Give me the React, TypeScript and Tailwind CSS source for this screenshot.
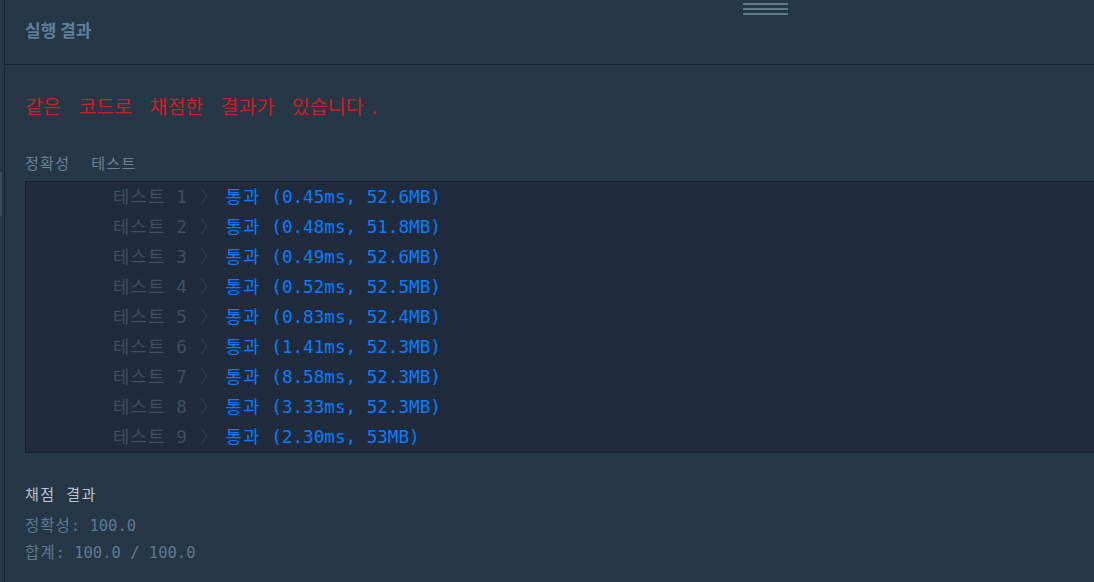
import React from 'react'

const mono = "font-['DejaVu_Sans_Mono','Noto_Sans_CJK_KR',monospace]"

const tests = [
  ['1', '0.45ms, 52.6MB'],
  ['2', '0.48ms, 51.8MB'],
  ['3', '0.49ms, 52.6MB'],
  ['4', '0.52ms, 52.5MB'],
  ['5', '0.83ms, 52.4MB'],
  ['6', '1.41ms, 52.3MB'],
  ['7', '8.58ms, 52.3MB'],
  ['8', '3.33ms, 52.3MB'],
  ['9', '2.30ms, 53MB'],
]

function TestRow({ no, stat }: { no: string; stat: string }) {
  return (
    <div className="flex items-center h-[30px] pl-[87px] whitespace-pre">
      <span className="text-[#3f5063]">
        <span className="tracking-[1.4px]">테스트</span> {no}
      </span>
      <span className="text-[#2e3d4f] ml-[13px] mr-[8px]">〉</span>
      <span className="text-[#0a7cff]">
        <span className="tracking-[1.4px]">통과</span> ({stat})
      </span>
    </div>
  )
}

export default function App() {
  return (
    <div className="w-[1094px] h-[582px] overflow-hidden flex bg-[#263747]">
      <div className="w-[4px] shrink-0 flex flex-col">
        <div className="h-[172px]" />
        <div className="w-[2px] h-[44px] bg-[#3a4b5c]" />
      </div>
      <div className="w-px shrink-0 bg-[#1a2533]" />
      <div className="flex-1 flex flex-col min-w-0">
        <div className="relative h-[65px] border-b border-[#172230] flex items-center pl-[20px] pb-[4px]">
          <span className="font-['Noto_Sans_CJK_KR',sans-serif] font-bold text-[17px] text-[#607f9b]">실행 결과</span>
          <div className="absolute left-[738px] top-[3px] w-[45px] flex flex-col gap-[3px]">
            <div className="h-[2px] bg-[#5e7c88]" />
            <div className="h-[2px] bg-[#5e7c88]" />
            <div className="h-[2px] bg-[#5e7c88]" />
          </div>
        </div>
        <div className={`pl-[20px] pt-[27px] ${mono}`}>
          <div className="font-['Noto_Sans_CJK_KR',monospace] text-[#cc1f1f] text-[19.5px] leading-[28px] [word-spacing:13px] whitespace-pre">
            같은 코드로 채점한 결과가 있습니다<span className="ml-[8px]">.</span>
          </div>
          <div className="mt-[34px] text-[15px] leading-[20px] text-[#6d8293] whitespace-pre flex">
            <span className="tracking-[1.3px]">정확성</span>
            <span className="ml-[21px] tracking-[1.3px]">테스트</span>
          </div>
          <div className="mt-[7px] bg-[#202b3d] border border-r-0 border-[#172030] text-[17.6px]">
            {tests.map(([n, s]) => (
              <TestRow key={n} no={n} stat={s} />
            ))}
          </div>
          <div className="mt-[32px] text-[15px] leading-[20px] text-[#b9c4cd] whitespace-pre tracking-[1.5px]">채점 결과</div>
          <div className="mt-[11px] text-[15.5px] leading-[20px] text-[#5d7a90] whitespace-pre">
            <span className="tracking-[1px]">정확성</span>: 100.0
          </div>
          <div className="mt-[7px] text-[15.5px] leading-[20px] text-[#5d7a90] whitespace-pre">
            <span className="tracking-[1px]">합계</span>: 100.0 / 100.0
          </div>
        </div>
      </div>
    </div>
  )
}
